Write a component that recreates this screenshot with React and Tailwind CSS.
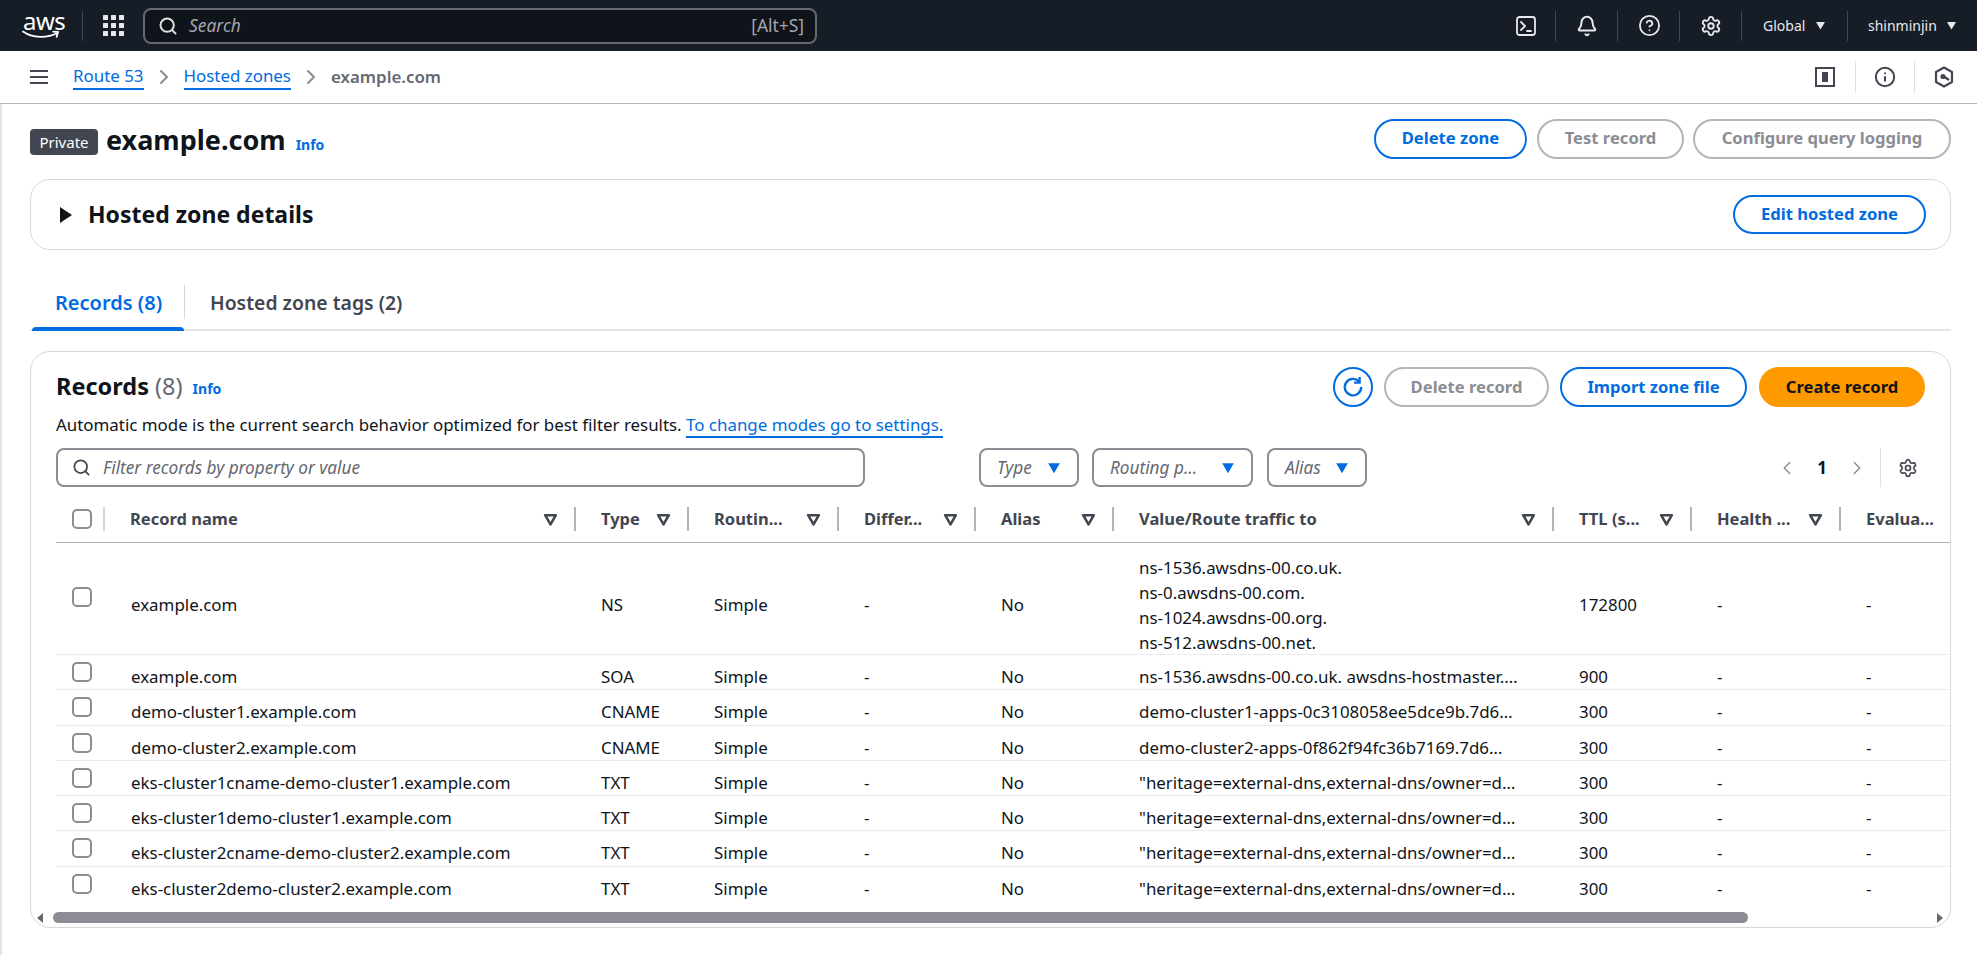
import React from "react";
import { Bell, ChevronLeft, ChevronRight, CircleHelp, Info, Search, Settings } from "lucide-react";

const colWidths = ["w-[49px]", "w-[471px]", "w-[113px]", "w-[150px]", "w-[137px]", "w-[138px]", "w-[440px]", "w-[138px]", "w-[149px]", "w-[200px]"];

const headers = ["Record name", "Type", "Routin...", "Differ...", "Alias", "Value/Route traffic to", "TTL (s...", "Health ...", "Evalua..."];

const heritage = "\"heritage=external-dns,external-dns/owner=d…";

const rows = [
    { name: "example.com", type: "SOA", value: "ns-1536.awsdns-00.co.uk. awsdns-hostmaster.…", ttl: "900" },
    { name: "demo-cluster1.example.com", type: "CNAME", value: "demo-cluster1-apps-0c3108058ee5dce9b.7d6…", ttl: "300" },
    { name: "demo-cluster2.example.com", type: "CNAME", value: "demo-cluster2-apps-0f862f94fc36b7169.7d6…", ttl: "300" },
    { name: "eks-cluster1cname-demo-cluster1.example.com", type: "TXT", value: heritage, ttl: "300" },
    { name: "eks-cluster1demo-cluster1.example.com", type: "TXT", value: heritage, ttl: "300" },
    { name: "eks-cluster2cname-demo-cluster2.example.com", type: "TXT", value: heritage, ttl: "300" },
    { name: "eks-cluster2demo-cluster2.example.com", type: "TXT", value: heritage, ttl: "300" },
];

const nameServers = ["ns-1536.awsdns-00.co.uk.", "ns-0.awsdns-00.com.", "ns-1024.awsdns-00.org.", "ns-512.awsdns-00.net."];

const Caret = ({ className }) => (
    <svg viewBox="0 0 12 10" className={className} fill="currentColor"><path d="M1 1h10L6 9.5z" /></svg>
);

const SortIcon = () => (
    <svg viewBox="0 0 14 12" className="w-[15px] h-[13px] text-[#424650]" fill="none" stroke="currentColor" strokeWidth="2.4" strokeLinejoin="round"><path d="M2 2h10L7 10.5z" /></svg>
);

const Checkbox = () => <span className="block w-[20px] h-[20px] rounded-[5px] border-2 border-[#8c8c94] bg-white"></span>;

const NavDivider = () => <span className="block w-px h-[30px] bg-[#424650]"></span>;

const NavIcon = ({ children }) => <div className="w-[61px] flex justify-center text-[#e8e8ec]">{children}</div>;

const Button = ({ children, kind, className }) => {
    const colors = {
        normal: "border-[#006ce0] text-[#006ce0]",
        disabled: "border-[#b4b4bb] text-[#8c8c94]",
        primary: "border-[#ff9900] bg-[#ff9900] text-[#0f141a]",
    };
    return (
        <button className={`h-[39.5px] rounded-[20px] border-2 text-[16.6px] font-bold flex items-center justify-center ${colors[kind]} ${className}`}>
            {children}
        </button>
    );
};

const FilterSelect = ({ label, className }) => (
    <div className={`h-[39px] rounded-lg border-2 border-[#8c8c94] flex items-center justify-between pl-[16px] pr-[16px] ${className}`}>
        <span className="italic text-[17.2px] text-[#656871]">{label}</span>
        <Caret className="w-[14px] h-[12px] text-[#006ce0]" />
    </div>
);

const App = () => {
    return (
        <div className="w-[1977px] h-[955px] overflow-hidden bg-white text-[#0f141a] text-[16.9px] font-['Noto_Sans',sans-serif]">
            {/* barre du haut */}
            <header className="h-[51px] bg-[#161d26] flex items-center">
                <div className="w-[82px] pl-[22px] flex flex-col items-start">
                    <span className="text-[24px] leading-[19px] text-white tracking-[-0.5px] pl-[1px]">aws</span>
                    <svg viewBox="0 0 40 10" className="w-[39px] h-[10px] text-white" fill="none" stroke="currentColor" strokeWidth="1.8" strokeLinecap="round"><path d="M1 1.5c10 7 25 7 35 1.5M32 1.5l5 .5-1.5 5" /></svg>
                </div>
                <span className="block w-px h-[30px] bg-[#424650]"></span>
                <div className="w-[60px] flex justify-center">
                    <svg viewBox="0 0 21 21" className="w-[21px] h-[21px] text-[#e8e8ec]" fill="currentColor">
                        {[0, 8, 16].map((y) => [0, 8, 16].map((x) => <rect key={`${x}-${y}`} x={x} y={y} width="5" height="5" rx="0.5" />))}
                    </svg>
                </div>
                <div className="w-[674px] h-[36px] rounded-lg border-2 border-[#656871] bg-[#0f141a] flex items-center pl-[13px] pr-[11px]">
                    <Search className="w-[20px] h-[20px] text-[#dedee3]" strokeWidth={2.4} />
                    <span className="ml-[11px] italic text-[17.4px] text-[#a4a4ad]">Search</span>
                    <span className="ml-auto text-[#a4a4ad] text-[17.4px]">[Alt+S]</span>
                </div>
                <div className="ml-auto flex items-center">
                    <NavIcon>
                        <svg viewBox="0 0 20 20" className="w-[20px] h-[22px] ml-[2px]" fill="none" stroke="currentColor" strokeWidth="1.8" strokeLinecap="round" strokeLinejoin="round"><rect x="1" y="1" width="18" height="18" rx="2.5" /><path d="M5 6l4 4-4 4M11 15h4" /></svg>
                    </NavIcon>
                    <NavDivider />
                    <NavIcon><Bell className="w-[22px] h-[22px]" strokeWidth={2.2} /></NavIcon>
                    <NavDivider />
                    <NavIcon><CircleHelp className="w-[23px] h-[23px] ml-[2px]" strokeWidth={1.9} /></NavIcon>
                    <NavDivider />
                    <NavIcon><Settings className="w-[22px] h-[22px]" strokeWidth={2} /></NavIcon>
                    <NavDivider />
                    <div className="w-[105px] pl-[21px] flex items-center text-[#e8e8ec] text-[14px]">
                        Global <Caret className="w-[11px] h-[9px] ml-[10px]" />
                    </div>
                    <NavDivider />
                    <div className="w-[129px] pl-[20px] flex items-center text-[#e8e8ec] text-[14px]">
                        shinminjin <Caret className="w-[11px] h-[9px] ml-[9px]" />
                    </div>
                </div>
            </header>

            {/* fil d'ariane */}
            <div className="h-[53px] border-b border-[#b4b4bb] flex items-center pl-[30px] pr-[4px]">
                <svg viewBox="0 0 18 16" className="w-[18px] h-[16px] text-[#424650]" fill="none" stroke="currentColor" strokeWidth="2"><path d="M0 2h18M0 8h18M0 14h18" /></svg>
                <a className="ml-[25px] text-[#006ce0] border-b-2 border-[#006ce0] leading-[24px]">Route 53</a>
                <ChevronRight className="mx-[8px] w-[24px] h-[24px] text-[#8c8c94]" strokeWidth={2} />
                <a className="text-[#006ce0] border-b-2 border-[#006ce0] leading-[24px]">Hosted zones</a>
                <ChevronRight className="mx-[8px] w-[24px] h-[24px] text-[#8c8c94]" strokeWidth={2} />
                <span className="font-semibold text-[#656871]">example.com</span>
                <div className="ml-auto flex items-center text-[#424650]">
                    <div className="w-[60px] flex justify-center">
                        <svg viewBox="0 0 20 20" className="w-[20px] h-[20px]" fill="none" stroke="currentColor" strokeWidth="2"><rect x="1" y="1" width="18" height="18" /><rect x="7" y="5" width="6" height="10" fill="currentColor" stroke="none" /></svg>
                    </div>
                    <span className="block w-px h-[32px] bg-[#dedee3]"></span>
                    <div className="w-[58px] flex justify-center"><Info className="w-[22px] h-[22px]" strokeWidth={2.2} /></div>
                    <span className="block w-px h-[32px] bg-[#dedee3]"></span>
                    <div className="w-[58px] flex justify-center">
                        <svg viewBox="0 0 20 22" className="w-[20px] h-[22px]" fill="none" stroke="currentColor" strokeWidth="2.2" strokeLinejoin="round"><path d="M10 1.5l8 4.5v10l-8 4.5-8-4.5V6z" /><path d="M9 10l6 4" /><circle cx="9" cy="10.5" r="2.6" fill="currentColor" stroke="none" /></svg>
                    </div>
                </div>
            </div>

            {/* contenu */}
            <main className="h-[851px] border-l-2 border-[#e4e4e8] pl-[28px] pr-[26px]">
                <div className="h-[75px] flex items-start pt-[15px]">
                    <span className="mt-[10px] h-[26px] w-[68px] rounded bg-[#424650] text-white text-[15px] flex items-center justify-center">Private</span>
                    <h1 className="ml-[8px] mt-[1px] text-[27px] leading-[40px] font-bold">example.com</h1>
                    <a className="ml-[10px] mt-[16px] text-[14px] leading-[20px] font-bold text-[#006ce0]">Info</a>
                    <div className="ml-auto flex">
                        <Button kind="normal" className="w-[153px]">Delete zone</Button>
                        <Button kind="disabled" className="ml-[10px] w-[147px]">Test record</Button>
                        <Button kind="disabled" className="ml-[9px] w-[258px]">Configure query logging</Button>
                    </div>
                </div>

                <section className="h-[71px] rounded-[20px] border border-[#d8d8dc] flex items-center pl-[29px] pr-[24px]">
                    <svg viewBox="0 0 12 16" className="w-[12px] h-[16px]" fill="currentColor"><path d="M0 0l12 8-12 8z" /></svg>
                    <h2 className="ml-[16px] text-[23px] font-bold">Hosted zone details</h2>
                    <Button kind="normal" className="ml-auto w-[193px]">Edit hosted zone</Button>
                </section>

                {/* onglets */}
                <div className="mt-[29px] h-[52px] border-b-2 border-[#e4e4e8] flex">
                    <div className="relative w-[154px] pl-[25px] pt-[9px] text-[20px] font-semibold text-[#006ce0]">
                        Records (8)
                        <span className="absolute left-[2px] right-0 bottom-[-2px] h-[4px] rounded-t bg-[#006ce0]"></span>
                    </div>
                    <span className="mt-[6px] h-[34px] w-px bg-[#d8d8dc]"></span>
                    <div className="pl-[25px] pt-[9px] text-[19.4px] font-semibold text-[#424650]">Hosted zone tags (2)</div>
                </div>

                {/* tableau */}
                <section className="mt-[20px] h-[577px] rounded-[20px] border border-[#d8d8dc] overflow-hidden flex flex-col">
                    <div className="px-[25px] pt-[15px]">
                        <div className="h-[40px] flex items-center">
                            <h2 className="text-[23.5px] font-bold">Records <span className="font-normal text-[#656871]">(8)</span></h2>
                            <a className="ml-[10px] mt-[3px] text-[14px] font-bold text-[#006ce0]">Info</a>
                            <div className="ml-auto flex items-center">
                                <button className="w-[40px] h-[40px] rounded-full border-2 border-[#006ce0] flex items-center justify-center text-[#006ce0]">
                                    <svg viewBox="0 0 20 20" className="w-[22px] h-[22px]" fill="none" stroke="currentColor" strokeWidth="2.2"><path d="M15.5 5A7.5 7.5 0 1 0 17.5 10" /><path d="M16 1v5h-5" /></svg>
                                </button>
                                <Button kind="disabled" className="ml-[11px] w-[165px]">Delete record</Button>
                                <Button kind="normal" className="ml-[11px] w-[187px]">Import zone file</Button>
                                <Button kind="primary" className="ml-[12px] w-[166px]">Create record</Button>
                            </div>
                        </div>
                        <p className="mt-[6px] leading-[24px] text-[#0f141a]">
                            Automatic mode is the current search behavior optimized for best filter results. <a className="text-[#006ce0] border-b-2 border-[#006ce0]">To change modes go to settings.</a>
                        </p>
                        <div className="mt-[11px] flex items-center">
                            <div className="w-[809px] h-[39px] rounded-lg border-2 border-[#8c8c94] flex items-center pl-[14px]">
                                <Search className="w-[19px] h-[19px] text-[#424650]" strokeWidth={2.2} />
                                <span className="ml-[12px] italic text-[17.2px] text-[#656871]">Filter records by property or value</span>
                            </div>
                            <FilterSelect label="Type" className="ml-[114px] w-[100px]" />
                            <FilterSelect label="Routing p..." className="ml-[13px] w-[161px]" />
                            <FilterSelect label="Alias" className="ml-[14px] w-[100px]" />
                            <div className="ml-auto flex items-center text-[#424650]">
                                <ChevronLeft className="w-[22px] h-[22px] text-[#8c8c94]" strokeWidth={1.5} />
                                <span className="mx-[19px] font-bold text-[#0f141a]">1</span>
                                <ChevronRight className="w-[22px] h-[22px] text-[#8c8c94]" strokeWidth={1.5} />
                                <span className="ml-[12px] block w-px h-[39px] bg-[#dedee3]"></span>
                                <Settings className="ml-[17px] mr-[7px] w-[20px] h-[20px]" strokeWidth={2} />
                            </div>
                        </div>
                    </div>

                    <div className="mt-[9px] ml-[25px] flex flex-col">
                        <div className="h-[47px] border-b border-[#b4b4bb] flex items-center w-max text-[16.5px]">
                            <div className={`${colWidths[0]} h-[24px] flex items-center border-r-2 border-[#d8d8dc] pl-[16px]`}><Checkbox /></div>
                            {headers.map((h, i) => (
                                <div key={h} className={`${colWidths[i + 1]} h-[24px] pl-[25px] pr-[16px] flex items-center justify-between font-bold text-[#424650] ${i < 8 ? "border-r-2 border-[#b4b4bb]" : ""}`}>
                                    <span>{h}</span>
                                    {i < 8 ? <SortIcon /> : null}
                                </div>
                            ))}
                        </div>

                        <div className="h-[112px] border-b border-[#ebebf0] flex w-max">
                            <div className={`${colWidths[0]} pl-[16px] pt-[44px]`}><Checkbox /></div>
                            <div className={`${colWidths[1]} pl-[26px] pt-[49px]`}>example.com</div>
                            <div className={`${colWidths[2]} pl-[25px] pt-[49px]`}>NS</div>
                            <div className={`${colWidths[3]} pl-[25px] pt-[49px]`}>Simple</div>
                            <div className={`${colWidths[4]} pl-[25px] pt-[49px]`}>-</div>
                            <div className={`${colWidths[5]} pl-[25px] pt-[49px]`}>No</div>
                            <div className={`${colWidths[6]} pl-[25px] pt-[12px] leading-[25px]`}>
                                {nameServers.map((ns) => <div key={ns}>{ns}</div>)}
                            </div>
                            <div className={`${colWidths[7]} pl-[25px] pt-[49px]`}>172800</div>
                            <div className={`${colWidths[8]} pl-[25px] pt-[49px]`}>-</div>
                            <div className={`${colWidths[9]} pl-[25px] pt-[49px]`}>-</div>
                        </div>

                        {rows.map((row, i) => (
                            <div key={row.name + i} className={`h-[35.3px] flex w-max leading-[24px] ${i < 6 ? "border-b border-[#ebebf0]" : ""}`}>
                                <div className={`${colWidths[0]} pl-[16px] pt-[7px]`}><Checkbox /></div>
                                <div className={`${colWidths[1]} pl-[26px] pt-[10px]`}>{row.name}</div>
                                <div className={`${colWidths[2]} pl-[25px] pt-[10px]`}>{row.type}</div>
                                <div className={`${colWidths[3]} pl-[25px] pt-[10px]`}>Simple</div>
                                <div className={`${colWidths[4]} pl-[25px] pt-[10px]`}>-</div>
                                <div className={`${colWidths[5]} pl-[25px] pt-[10px]`}>No</div>
                                <div className={`${colWidths[6]} pl-[25px] pt-[10px]`}>{row.value}</div>
                                <div className={`${colWidths[7]} pl-[25px] pt-[10px]`}>{row.ttl}</div>
                                <div className={`${colWidths[8]} pl-[25px] pt-[10px]`}>-</div>
                                <div className={`${colWidths[9]} pl-[25px] pt-[10px]`}>-</div>
                            </div>
                        ))}
                    </div>

                    {/* barre de défilement */}
                    <div className="mt-[10px] h-[11px] flex items-center pl-[6px] pr-[7px]">
                        <svg viewBox="0 0 6 10" className="w-[6px] h-[10px] text-[#656871]" fill="currentColor"><path d="M6 0v10L0 5z" /></svg>
                        <span className="ml-[10px] block w-[1695px] h-[11px] rounded-full bg-[#8c8c94]"></span>
                        <svg viewBox="0 0 6 10" className="ml-auto w-[6px] h-[10px] text-[#656871]" fill="currentColor"><path d="M0 0v10l6-5z" /></svg>
                    </div>
                </section>
            </main>
        </div>
    );
};

export default App;
